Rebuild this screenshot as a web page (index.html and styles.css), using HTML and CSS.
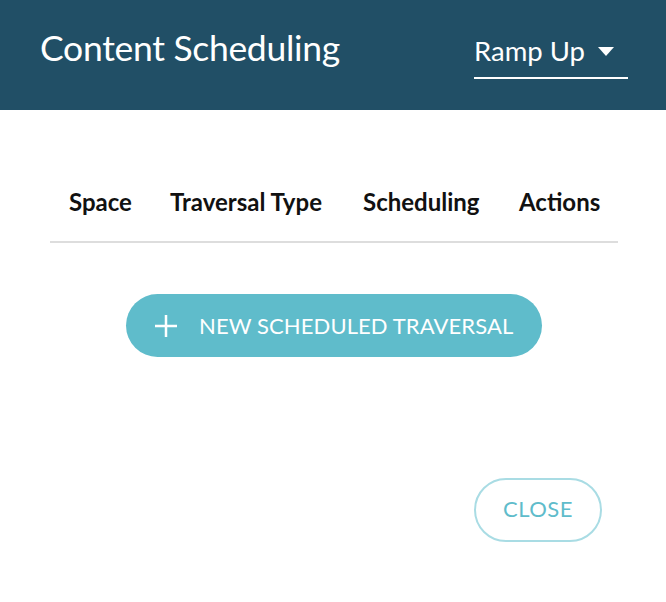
FILE: index.html
```html
<!DOCTYPE html>
<html>
<head>
<meta charset="utf-8">
<link rel="stylesheet" href="styles.css">
</head>
<body>
<header class="header">
  <h1 class="title">Content Scheduling</h1>
  <div class="select">
    <span class="select-label">Ramp Up</span>
    <svg class="caret" width="16" height="9" viewBox="0 0 16 9"><path d="M0 0H16L8 9Z" fill="#fff"/></svg>
  </div>
</header>
<main class="content">
  <div class="table-head">
    <span class="col">Space</span>
    <span class="col">Traversal Type</span>
    <span class="col">Scheduling</span>
    <span class="col">Actions</span>
  </div>
  <div class="add-row">
    <button class="btn-add">
      <svg class="plus" width="22" height="22" viewBox="0 0 22 22"><path d="M11 0V22M0 11H22" stroke="#fff" stroke-width="2.5"/></svg>
      <span>NEW SCHEDULED TRAVERSAL</span>
    </button>
  </div>
  <div class="footer">
    <button class="btn-close">CLOSE</button>
  </div>
</main>
</body>
</html>
```
FILE: styles.css
```css
* { box-sizing: border-box; }
body {
  margin: 0;
  font-family: Lato, "Open Sans", sans-serif;
  background: #fff;
  width: 666px;
  height: 602px;
  overflow: hidden;
}
.header {
  height: 110px;
  background: #214f66;
  display: flex;
  align-items: flex-start;
  justify-content: space-between;
  padding: 0 38px 0 40px;
}
.title {
  margin: 26px 0 0;
  font-size: 35.5px;
  line-height: 44px;
  font-weight: 400;
  color: #fff;
  letter-spacing: -0.3px;
}
.select {
  margin-top: 34px;
  width: 154px;
  height: 45px;
  border-bottom: 2px solid #fff;
  display: flex;
  align-items: flex-start;
  justify-content: space-between;
  padding: 0 14px 0 0;
  color: #fff;
}
.select-label {
  font-size: 27.5px;
  line-height: 34px;
}
.caret { margin-top: 13px; }
.content {
  padding: 0 48px 0 50px;
}
.table-head {
  margin-top: 76px;
  height: 57px;
  border-bottom: 2px solid #dddddd;
  display: grid;
  grid-template-columns: 101px 193px 156px auto;
  padding-left: 19px;
  align-items: start;
  font-weight: 700;
  font-size: 24px;
  color: #111;
}
.col { line-height: 32px; white-space: nowrap; }
.add-row {
  display: flex;
  padding-left: 76px;
  margin-top: 51px;
}
.btn-add {
  width: 416px;
  height: 63px;
  border: none;
  border-radius: 32px;
  background: #5fbccb;
  color: #fff;
  font-family: inherit;
  font-size: 22px;
  display: flex;
  align-items: center;
  padding: 0 0 0 29px;
  gap: 22px;
  letter-spacing: 0.1px;
}
.footer {
  display: flex;
  justify-content: flex-end;
  margin-top: 121px;
  padding-right: 16px;
}
.btn-close {
  width: 128px;
  height: 64px;
  border: 2px solid #a9dce4;
  border-radius: 32px;
  background: #fff;
  color: #5fbccb;
  font-family: inherit;
  font-size: 22px;
  padding: 0 0 3px;
  letter-spacing: 0.5px;
}
```
